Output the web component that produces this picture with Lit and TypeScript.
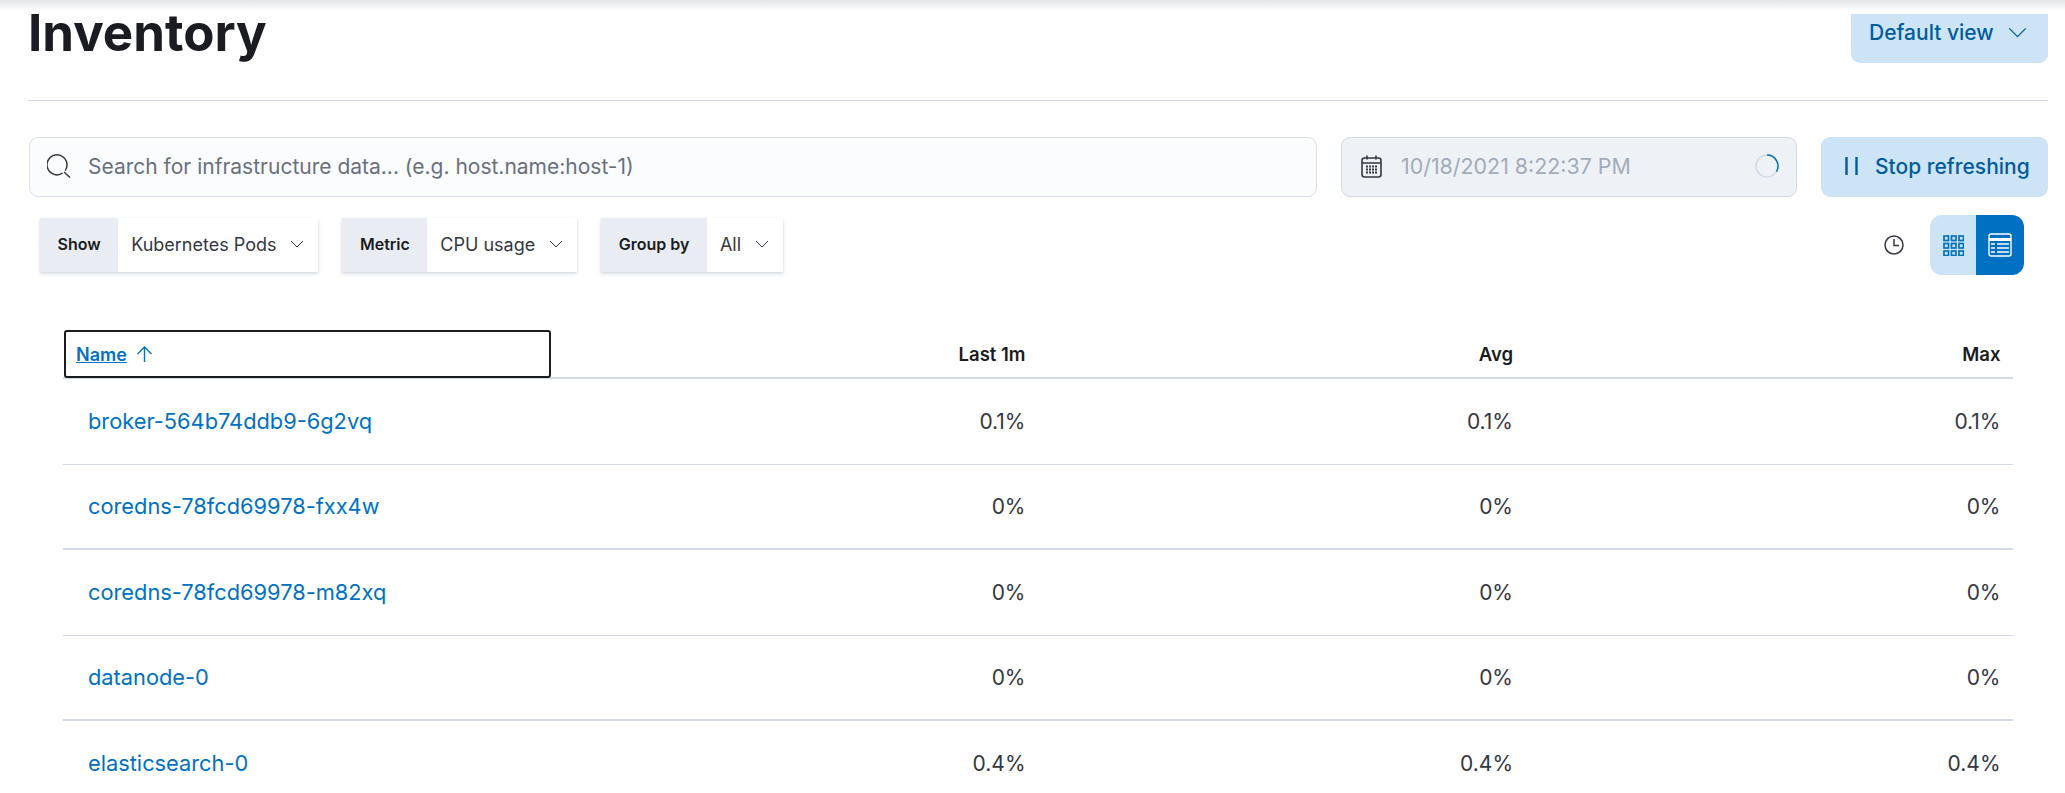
import {LitElement, css, html, svg} from 'lit';
import {customElement} from 'lit/decorators.js';

interface PodRow {
  name: string;
  last: string;
  avg: string;
  max: string;
}

const chevron = (w: number) => html`<svg class="chev" width="${w}" height="${Math.round(w * 0.6)}" viewBox="0 0 20 12"><path d="M1 1.5l9 9 9-9" fill="none" stroke="currentColor" stroke-width="1.5"/></svg>`;

const gridCells = () => {
  const out = [];
  for (const y of [1, 8.5, 16]) {
    for (const x of [1, 8.5, 16]) {
      out.push(svg`<rect x="${x}" y="${y}" width="4.5" height="4.5" fill="none" stroke="currentColor" stroke-width="1.7"/>`);
    }
  }
  return out;
};

@customElement('app-root')
export class AppRoot extends LitElement {
  static styles = css`
    :host {
      display: block;
      height: 100vh;
      overflow: hidden;
      background: #fff;
      color: #1a1c21;
      font-family: Inter, 'Noto Sans', sans-serif;
      position: relative;
    }
    .shade {
      position: absolute;
      inset: 0 0 auto 0;
      height: 14px;
      background: linear-gradient(#e4e5e7, #fff 80%);
      pointer-events: none;
    }
    main {
      position: relative;
      padding: 3px 17px 0 28px;
    }
    .head {
      display: flex;
      justify-content: space-between;
      align-items: flex-start;
      height: 97px;
      border-bottom: 1px solid #d3dae6;
    }
    h1 {
      margin: 0;
      font-size: 51px;
      line-height: 60px;
      font-weight: 700;
    }
    .btn {
      display: flex;
      align-items: center;
      height: 60px;
      box-sizing: border-box;
      padding-bottom: 2px;
      border-radius: 9px;
      background: #cce4f5;
      color: #005c9e;
      font-size: 21px;
      font-weight: 500;
    }
    .view {
      width: 197px;
      padding: 0 21px 2px 18px;
      justify-content: space-between;
    }
    .search-row {
      display: flex;
      gap: 24px;
      margin-top: 36px;
    }
    .search, .date {
      display: flex;
      align-items: center;
      height: 60px;
      box-sizing: border-box;
      border: 1px solid #d9e0ec;
      border-radius: 9px;
      font-size: 21px;
    }
    .search {
      flex: 1;
      margin-left: 1px;
      background: #fbfcfd;
      color: #69707d;
      padding: 0 0 2px 17px;
      gap: 17px;
    }
    .date {
      width: 456px;
      background: #eef2f7;
      color: #a2abba;
      font-size: 21.4px;
      padding: 0 17px 2px 19px;
      gap: 19px;
      border-color: #d3dae6;
    }
    .date .spin {
      margin-left: auto;
    }
    .stop {
      width: 227px;
      padding: 0 0 2px 24px;
      gap: 17px;
    }
    .tools {
      display: flex;
      align-items: center;
      height: 60px;
      margin-top: 18px;
      padding: 0 24px 0 12px;
    }
    .pick {
      display: flex;
      align-items: stretch;
      height: 54px;
      margin-right: 24px;
      background: #fff;
      box-shadow: 0 2px 4px rgba(152, 162, 179, 0.3), 0 1px 2px rgba(152, 162, 179, 0.2);
    }
    .pick b {
      display: flex;
      align-items: center;
      padding: 0 17.5px 2px;
      background: #e9edf3;
      font-weight: 600;
      font-size: 16px;
    }
    .pick span {
      display: flex;
      align-items: center;
      padding: 0 14px 2px 13px;
      gap: 14px;
      color: #343741;
      font-size: 18px;
    }
    .pick .chev {
      color: #343741;
    }
    .clock {
      margin-left: auto;
      margin-right: 26px;
    }
    .toggle {
      display: flex;
      width: 94px;
      height: 60px;
      border-radius: 12px;
      overflow: hidden;
    }
    .toggle div {
      display: flex;
      align-items: center;
      justify-content: center;
    }
    .toggle .off {
      width: 46px;
      background: #cce4f5;
      color: #0071c2;
    }
    .toggle .on {
      flex: 1;
      background: #0071c2;
      color: #fff;
    }
    .table {
      margin: 0 35px 0 35px;
      padding-top: 55px;
    }
    .row {
      display: grid;
      grid-template-columns: repeat(4, 1fr);
      align-items: center;
      height: 85.5px;
      box-sizing: border-box;
      border-bottom: 1px solid #d3dae6;
      font-size: 21px;
      color: #343741;
    }
    .row:nth-child(odd) {
      border-bottom-width: 2px;
    }
    .row a {
      color: #0071c2;
      font-size: 21.8px;
      padding-left: 25px;
      text-decoration: none;
    }
    .row div {
      text-align: right;
      padding-right: 12.5px;
    }
    .row.top {
      height: 49px;
      border-bottom: 2px solid #d3dae6;
      font-size: 18.5px;
      font-weight: 600;
      align-items: stretch;
      color: #1a1c21;
    }
    .row.top div {
      display: flex;
      align-items: center;
      justify-content: flex-end;
    }
    .row.top .sort {
      justify-content: flex-start;
      gap: 9px;
      height: 48px;
      box-sizing: border-box;
      margin-left: 1px;
      padding: 0 0 0 10px;
      border: 2px solid #1a1c21;
      border-radius: 3px;
      color: #0071c2;
      font-size: 18px;
      text-decoration: underline;
    }
  `;

  rows: Array<PodRow> = [
    {name: 'broker-564b74ddb9-6g2vq', last: '0.1%', avg: '0.1%', max: '0.1%'},
    {name: 'coredns-78fcd69978-fxx4w', last: '0%', avg: '0%', max: '0%'},
    {name: 'coredns-78fcd69978-m82xq', last: '0%', avg: '0%', max: '0%'},
    {name: 'datanode-0', last: '0%', avg: '0%', max: '0%'},
    {name: 'elasticsearch-0', last: '0.4%', avg: '0.4%', max: '0.4%'}
  ];

  render() {
    return html`
      <main>
        <div class="head">
          <h1>Inventory</h1>
          <div class="btn view">Default view ${chevron(19)}</div>
        </div>
        <div class="search-row">
          <div class="search">
            <svg width="24" height="24" viewBox="0 0 24 24"><path d="M15.5 19.2A10 10 0 1 1 20 11a10 10 0 0 1-1.8 5.6M17 18l6 5.5" fill="none" stroke="#343741" stroke-width="1.5"/></svg>
            Search for infrastructure data... (e.g. host.name:host-1)
          </div>
          <div class="date">
            <svg width="21" height="23" viewBox="0 0 21 23" fill="none" stroke="#343741" stroke-width="1.6"><rect x="1" y="3" width="19" height="19" rx="2.5"/><path d="M1 8h19M6 0.5v4M15 0.5v4"/><path d="M5 11.5h11M5 14.5h11M5 17.5h11" stroke-width="2" stroke-dasharray="2 1"/></svg>
            10/18/2021 8:22:37 PM
            <svg class="spin" width="24" height="24" viewBox="0 0 24 24" fill="none"><circle cx="12" cy="12" r="11" stroke="#d3dae6" stroke-width="1.5"/><path d="M12 1a11 11 0 0 1 9.5 16.5" stroke="#0071c2" stroke-width="1.5"/></svg>
          </div>
          <div class="btn stop">
            <svg width="13" height="18" viewBox="0 0 13 18"><path d="M1.5 0v18M11.5 0v18" stroke="currentColor" stroke-width="2.4"/></svg>
            Stop refreshing
          </div>
        </div>
        <div class="tools">
          <div class="pick"><b>Show</b><span>Kubernetes Pods ${chevron(14)}</span></div>
          <div class="pick"><b>Metric</b><span>CPU usage ${chevron(14)}</span></div>
          <div class="pick"><b>Group by</b><span>All ${chevron(14)}</span></div>
          <svg class="clock" width="20" height="20" viewBox="0 0 20 20" fill="none" stroke="#343741" stroke-width="1.5"><circle cx="10" cy="10" r="9"/><path d="M10 4v6.5h5"/></svg>
          <div class="toggle">
            <div class="off"><svg width="21" height="21" viewBox="0 0 21 21">${gridCells()}</svg></div>
            <div class="on">
              <svg width="24" height="24" viewBox="0 0 24 24" fill="none" stroke="currentColor" stroke-width="1.4"><rect x="1" y="1" width="22" height="22" rx="2"/><path d="M1 6.5h22" stroke-width="3"/><path d="M3 11h4M9 11h12M3 15h4M9 15h12M3 19h4M9 19h12" stroke-width="1.6"/></svg>
            </div>
          </div>
        </div>
        <div class="table">
          <div class="row top">
            <div class="sort">Name <svg width="17" height="16" viewBox="0 0 17 16" fill="none"><path d="M8.5 16V1M1.5 8l7-7 7 7" stroke="currentColor" stroke-width="1.4"/></svg></div>
            <div>Last 1m</div>
            <div>Avg</div>
            <div>Max</div>
          </div>
          ${this.rows.map(r => html`
            <div class="row">
              <a>${r.name}</a>
              <div>${r.last}</div>
              <div>${r.avg}</div>
              <div>${r.max}</div>
            </div>
          `)}
        </div>
      </main>
      <div class="shade"></div>
    `;
  }
}
